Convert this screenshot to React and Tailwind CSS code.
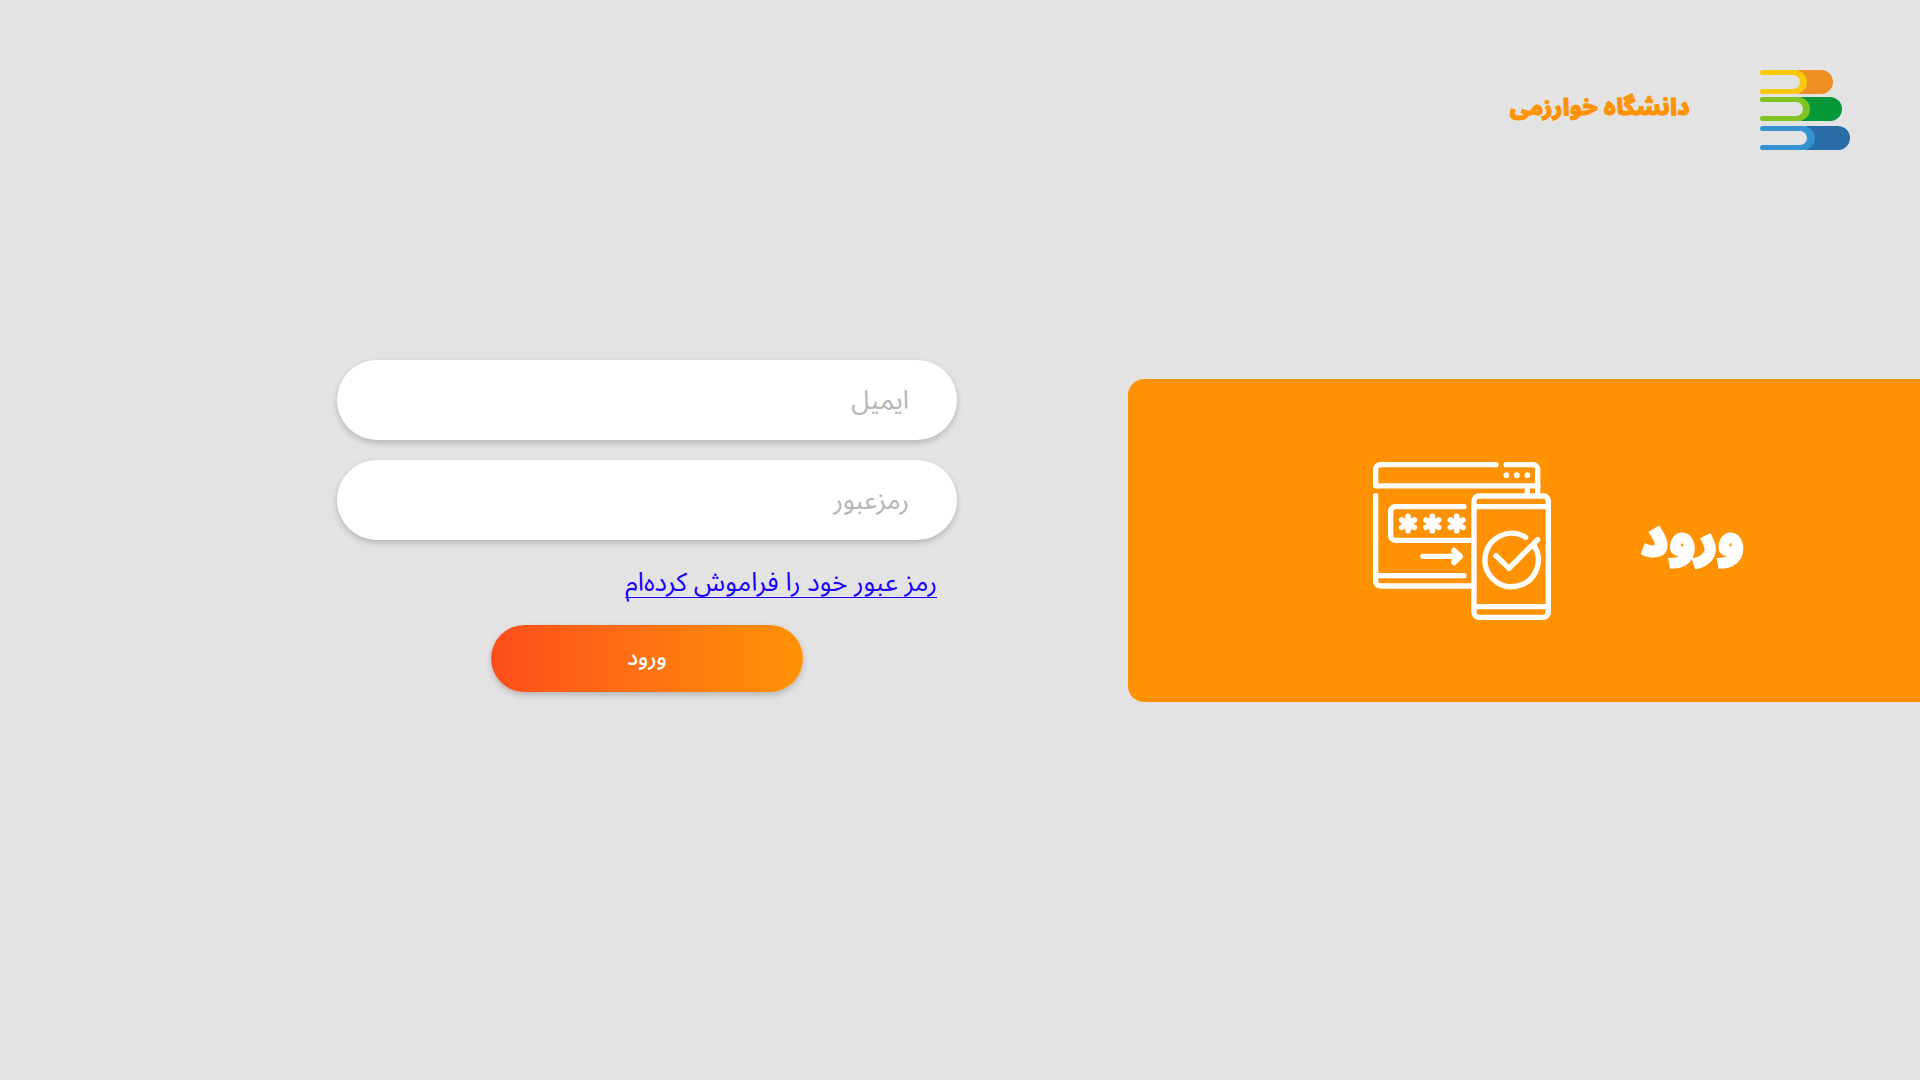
const books = [
  { y: 60, spine: 165, inner: 159, end: 243, page: "#f9c80a", cover: "#ee8f22" },
  { y: 141, spine: 174, inner: 168, end: 270, page: "#80c423", cover: "#049838" },
  { y: 228, spine: 189, inner: 180, end: 294, page: "#3393d0", cover: "#296da8" },
];

function BooksLogo() {
  return (
    <svg className="h-20 w-[90px] shrink-0" viewBox="60 60 270 240" aria-hidden="true">
      {books.map((b) => (
        <g key={b.y}>
          <path
            fill={b.cover}
            d={`M${b.spine} ${b.y}H${b.end}a36 36 0 0 1 0 72H${b.spine}a30 36 0 0 0 0-72z`}
          />
          <path
            fill={b.page}
            d={`M67.5 ${b.y}H${b.spine}a36 36 0 0 1 0 72H67.5a7.5 7.5 0 0 1 0-15H${b.inner}a21 21 0 0 0 0-42H67.5a7.5 7.5 0 0 1 0-15z`}
          />
        </g>
      ))}
    </svg>
  );
}

function LoginIcon() {
  return (
    <svg
      className="h-[158px] w-[178px] shrink-0"
      viewBox="42 36 534 474"
      fill="none"
      stroke="#fff"
      strokeWidth="16"
      strokeLinecap="round"
      strokeLinejoin="round"
      aria-hidden="true"
    >
      <path d="M411 44H64a14 14 0 0 0-14 14V107.500H537" />
      <path d="M441 44H522a14 14 0 0 1 14 14V132M505 110V132" />
      <path d="M50 137V394a14 14 0 0 0 14 14H340M52 377H315" />
      <path d="M315 170H109a14 14 0 0 0-14 14V257a14 14 0 0 0 14 14H340" />
      <path d="M192 319H302M285 301L304 319L285 338" />
      <path d="M286 303V335L303 319Z" fill="#fff" />
      {[147, 220, 293].map((x) => (
        <path
          key={x}
          strokeWidth="17"
          d={`M${x} 199V242M${x - 19} 210L${x + 19} 232M${x + 19} 210L${x - 19} 232`}
        />
      ))}
      <rect x="345" y="138" width="223" height="364" rx="15" />
      <path d="M347 170H566M347 470H566" />
      <path d="M500 262A80 80 0 1 0 526 288" />
      <path d="M411 317L450 355L536 269" />
      <g fill="#fff" stroke="none">
        <circle cx="442" cy="75.500" r="8.500" />
        <circle cx="473.500" cy="75.500" r="8.500" />
        <circle cx="505" cy="75.500" r="8.500" />
      </g>
    </svg>
  );
}

const field =
  "h-20 w-full rounded-[40px] bg-white px-12 text-[26px] text-gray-700 shadow-[0_3px_6px_rgba(0,0,0,0.2)] outline-none placeholder:text-[#b5b5b5]";

export default function App() {
  return (
    <div
      dir="rtl"
      lang="fa"
      className="flex min-h-screen flex-col bg-[#e3e3e3] font-['Noto_Sans_Arabic','Vazirmatn','DejaVu_Sans',sans-serif]"
    >
      <header className="flex items-center gap-[70px] px-[70px] pt-[70px]">
        <BooksLogo />
        <p className="pb-1 text-[23px] font-black text-[#ff9203] [-webkit-text-stroke:1px_#ff9203]">
          دانشگاه خوارزمی
        </p>
      </header>
      <main className="mt-[210px] flex items-start">
        <section className="mt-[19px] flex h-[323px] w-[41.25%] items-center gap-[90px] rounded-l-2xl bg-[#ff9203] pr-[176px]">
          <h1 className="text-[50px] font-black text-white [-webkit-text-stroke:3px_#fff]">ورود</h1>
          <LoginIcon />
        </section>
        <form className="mr-[171px] flex w-[32.3%] flex-col gap-5" onSubmit={(e) => e.preventDefault()}>
          <input type="email" aria-label="ایمیل" placeholder="ایمیل" className={field} />
          <input type="password" aria-label="رمزعبور" placeholder="رمزعبور" className={field} />
          <a
            href="#forgot"
            className="mr-5 self-start text-[26px] leading-[45px] text-[#1a00ff] underline decoration-1 underline-offset-[6px] [text-decoration-skip-ink:none]"
          >
            رمز عبور خود را فراموش کرده‌ام
          </a>
          <button
            type="submit"
            className="h-[67px] w-[312px] self-center rounded-full bg-linear-to-r from-[#fd4c1a] to-[#ff9203] text-[22px] font-medium text-white shadow-[0_3px_6px_rgba(0,0,0,0.2)]"
          >
            ورود
          </button>
        </form>
      </main>
    </div>
  );
}
